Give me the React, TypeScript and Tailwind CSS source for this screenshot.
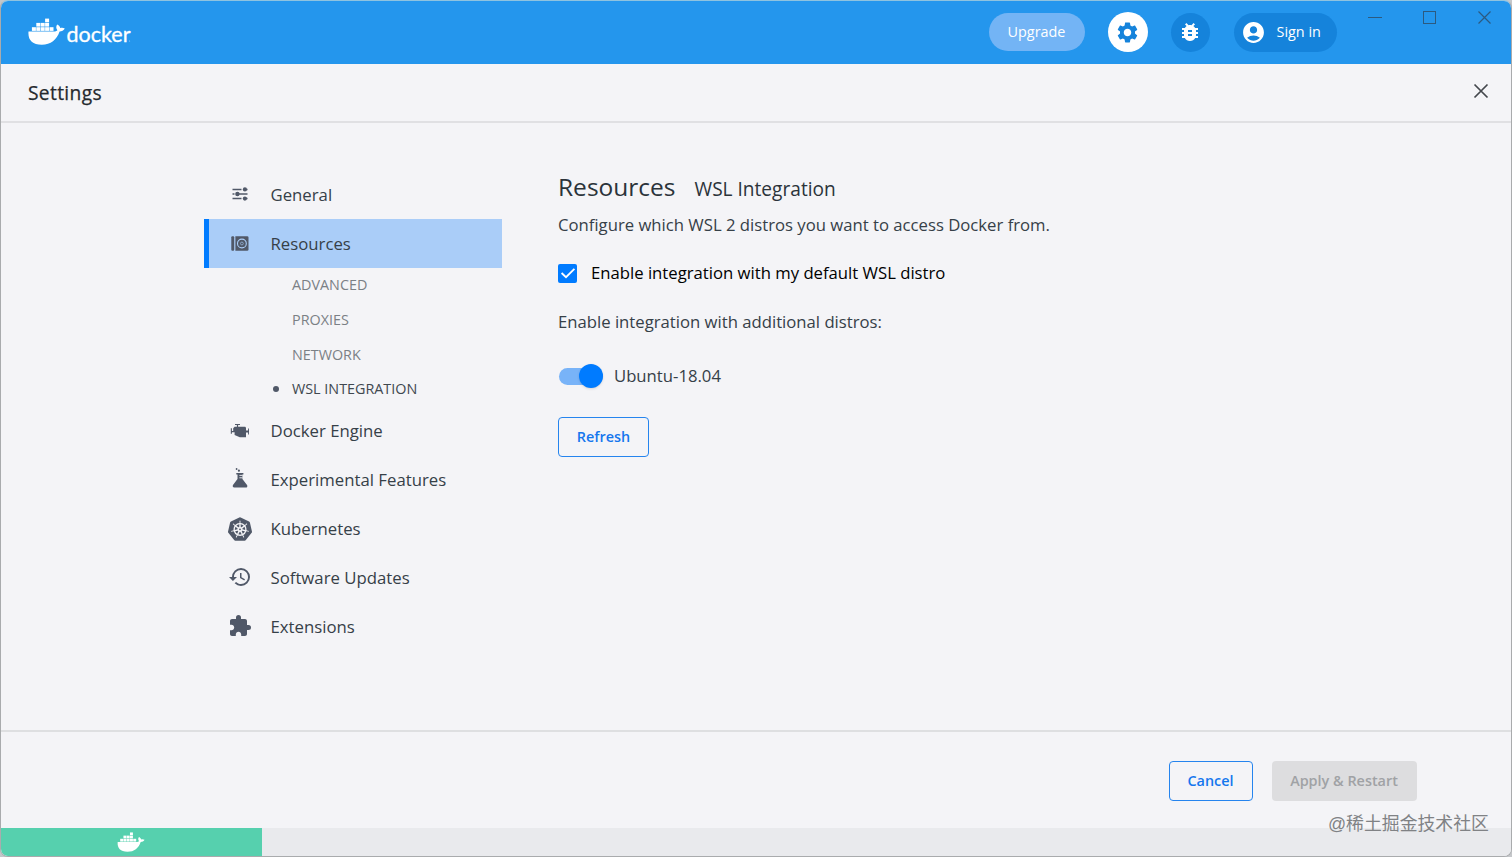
import type { ReactNode } from "react";
import { MdAccountCircle, MdBugReport, MdExtension, MdHistory, MdSettings } from "react-icons/md";
import { SiKubernetes } from "react-icons/si";

type NavItem = {
  label: string;
  icon: ReactNode;
  active?: boolean;
  children?: string[];
};

function Whale({ className }: { className?: string }) {
  return (
    <svg viewBox="0 0 37 27" className={className} fill="currentColor">
      <rect x="17.1" y="0.6" width="4" height="3.7" />
      {[8.3, 12.7, 17.1].map((x) => (
        <rect key={x} x={x} y="4.9" width="4" height="3.7" />
      ))}
      {[3.9, 8.3, 12.7, 17.1, 21.5].map((x) => (
        <rect key={x} x={x} y="9.2" width="4" height="3.7" />
      ))}
      <path d="M0.5 13.6H25.5C27.4 13.6 28.8 13 29.4 12.2C28 10.4 27.8 8.4 29.3 6.6C31 7.4 32 8.8 32.2 10.1C33.8 9.7 35.5 9.8 36.8 10.6C35.8 12.7 33.7 13.6 31.6 13.6C28.7 22 22.9 26.8 13.8 26.8C4.2 26.8-.2 21.9.5 13.6Z" />
    </svg>
  );
}

function SlidersIcon() {
  return (
    <svg viewBox="0 0 16 14" className="h-[14px] w-4" fill="currentColor" stroke="currentColor" strokeWidth="1.5">
      <path d="M.5 2.5H9.5M12 2.5H15.5M.5 7H2.5M5.5 7H15.5M.5 11.5H9.5M12 11.5H15.5" fill="none" />
      <g stroke="none">
        <circle cx="12.9" cy="2.4" r="2.1" />
        <circle cx="5.4" cy="7" r="2.2" />
        <circle cx="12.9" cy="11.6" r="2.1" />
      </g>
    </svg>
  );
}

function DiskIcon() {
  return (
    <svg viewBox="0 0 18 15" className="h-[15px] w-[18px]" fill="currentColor">
      <rect x="0.3" y="0.3" width="2.9" height="14.4" rx="1" />
      <path d="M4.4.3H16.2Q17.5.3 17.5 1.5V13.5Q17.5 14.7 16.2 14.7H4.4Z" />
      <circle cx="10.9" cy="7.5" r="4.4" fill="none" stroke="#aacdf8" strokeWidth="1.1" />
      <circle cx="10.9" cy="7.5" r="1.4" fill="none" stroke="#aacdf8" strokeWidth="0.6" />
    </svg>
  );
}

function EngineIcon() {
  return (
    <svg viewBox="0 0 20 16" className="h-4 w-5" fill="currentColor">
      <path d="M5 1H10V2H8.1V3.8H15.2L16 4.8V14.3H9.8L4.6 11.9V9.2H1.9V10.8H.8V5.2H1.9V7.9H3.2V5.2L4.6 3.8H6.9V2H5ZM16 7.6H18.1V5.6H19V11.6H18.1V9.4H16Z" />
    </svg>
  );
}

function FlaskIcon() {
  return (
    <svg viewBox="0 0 16 20" className="mb-[3px] h-5 w-4" fill="currentColor">
      <circle cx="4.6" cy="1" r=".9" />
      <circle cx="6.9" cy="2.7" r="1.1" />
      <path d="M4.3 5H11.4V6.5H10.4V11L15.2 17.2Q15.8 19.5 13.7 19.6H2.2Q.2 19.5.8 17.2L5.5 11V6.5H4.3Z" />
      <path d="M7.4 7.4H10.6M7.4 9.8H10.6" stroke="#f4f4f7" strokeWidth="0.9" />
    </svg>
  );
}

const navItems: NavItem[] = [
  { label: "General", icon: <SlidersIcon /> },
  {
    label: "Resources",
    icon: <DiskIcon />,
    active: true,
    children: ["ADVANCED", "PROXIES", "NETWORK", "WSL INTEGRATION"],
  },
  { label: "Docker Engine", icon: <EngineIcon /> },
  { label: "Experimental Features", icon: <FlaskIcon /> },
  { label: "Kubernetes", icon: <SiKubernetes size={24} /> },
  { label: "Software Updates", icon: <MdHistory size={24} /> },
  { label: "Extensions", icon: <MdExtension size={24} /> },
];

function TitleBar() {
  return (
    <header className="flex h-[63px] shrink-0 items-start bg-[#2496ed] pl-[27px] text-white">
      <div className="flex items-start pt-[17px]">
        <Whale className="h-[27px] w-[37px]" />
        <svg viewBox="0 0 68 27" className="h-[27px] w-[68px]">
          <text
            x="1.5"
            y="23.5"
            textLength="64"
            lengthAdjust="spacingAndGlyphs"
            className="fill-white stroke-white stroke-[0.3px] font-['Lato',sans-serif] text-[20.5px]"
          >
            docker
          </text>
          <circle cx="64.6" cy="23" r="0.5" fill="white" opacity="0.6" />
        </svg>
      </div>
      <div className="ml-auto flex items-center pt-[11px] text-[14.4px]">
        <button className="h-[38px] w-[96px] rounded-full bg-[#73b4f5]">Upgrade</button>
        <button className="ml-[23px] flex size-10 items-center justify-center rounded-full bg-white text-[#1583db]">
          <MdSettings size={25} />
        </button>
        <button className="ml-[23px] flex size-[39px] items-center justify-center rounded-full bg-[#1583db]">
          <MdBugReport size={24} />
        </button>
        <button className="ml-6 flex h-[39px] w-[103px] items-center rounded-full bg-[#1583db] pl-[7px]">
          <MdAccountCircle size={25} />
          <span className="ml-[11px]">Sign in</span>
        </button>
      </div>
      <div className="ml-[30.5px] flex gap-[40px] pt-[8px] pr-[19px] text-[#2c5a80]">
        <svg className="size-[15px]" viewBox="0 0 15 15" fill="none" stroke="currentColor">
          <path d="M1 8.5H15" />
        </svg>
        <svg className="size-[15px]" viewBox="0 0 15 15" fill="none" stroke="currentColor">
          <rect x="1.5" y="2.5" width="12" height="12" />
        </svg>
        <svg className="size-[15px]" viewBox="0 0 15 15" fill="none" stroke="currentColor" strokeWidth="1.2">
          <path d="M1.5 2.5L13.5 14.5M13.5 2.5L1.5 14.5" />
        </svg>
      </div>
    </header>
  );
}

function Sidebar() {
  return (
    <nav className="ml-[202.5px] w-[298px] shrink-0 pt-[47px] text-[16.75px] text-[#364048]">
      {navItems.map((item) => (
        <div key={item.label}>
          <div
            className={
              item.active
                ? "flex h-[49px] items-center border-l-[5px] border-[#007bff] bg-[#aacdf8]"
                : "flex h-[48.8px] items-center border-l-[5px] border-transparent"
            }
          >
            <span className="ml-[17px] flex w-[28px] justify-center text-[#505868]">{item.icon}</span>
            <span className="ml-[17px]">{item.label}</span>
          </div>
          {item.children ? (
            <ul className="text-[14.35px] text-[#7b8085]">
              {item.children.map((child) => (
                <li
                  key={child}
                  className={
                    child === "WSL INTEGRATION"
                      ? "flex h-[34.7px] items-center pl-[69px] text-[#40484f]"
                      : "flex h-[34.7px] items-center pl-[88.5px]"
                  }
                >
                  {child === "WSL INTEGRATION" ? (
                    <span className="mr-[13.5px] size-[6px] rounded-full bg-[#505868]" />
                  ) : null}
                  {child}
                </li>
              ))}
            </ul>
          ) : null}
        </div>
      ))}
    </nav>
  );
}

function WslSettings() {
  return (
    <main className="ml-[56.5px] flex flex-col items-start pt-[46px] text-[16.7px] text-[#364048]">
      <h1 className="flex h-[36px] items-baseline text-[24.5px] leading-[36px] text-[#2b333a]">
        <span>Resources</span>
        <span className="ml-[19px] text-[19.1px]">WSL Integration</span>
      </h1>
      <p className="mt-[8px] leading-6">Configure which WSL 2 distros you want to access Docker from.</p>
      <label className="mt-6 flex h-6 items-center text-black">
        <span className="flex size-[19px] items-center justify-center rounded-[2px] bg-[#007bff]">
          <svg viewBox="0 0 16 14" className="h-[14px] w-4" fill="none" stroke="white" strokeWidth="1.8">
            <path d="M1.6 7L6 11.2L14.4 2.8" />
          </svg>
        </span>
        <span className="ml-[14px]">Enable integration with my default WSL distro</span>
      </label>
      <p className="mt-[25px] leading-6">Enable integration with additional distros:</p>
      <div className="mt-[30px] flex h-6 items-center">
        <span className="ml-px flex h-[17px] w-[44px] items-center justify-end rounded-full bg-[#78b3f8]">
          <span className="size-6 shrink-0 rounded-full bg-[#007bff] shadow-sm" />
        </span>
        <span className="ml-[11px]">Ubuntu-18.04</span>
      </div>
      <button className="mt-[29px] h-10 w-[91px] rounded-[4px] border-[1.5px] border-[#2584ee] text-[14.4px] font-semibold text-[#1577ee]">
        Refresh
      </button>
    </main>
  );
}

export default function App() {
  return (
    <div className="h-[857px] w-[1512px] overflow-hidden bg-[#c5c7ca] font-['Open_Sans',sans-serif]">
      <div className="flex h-[857px] flex-col overflow-hidden rounded-lg border border-[#a9abad] border-t-[#8fc3df] bg-[#f4f4f7]">
        <TitleBar />
        <div className="flex h-[59px] shrink-0 items-center justify-between border-b-2 border-[#e0e0e3] pr-[22px] pl-[27px]">
          <h2 className="pt-[2px] text-[19.2px] font-medium tracking-[0.35px] text-[#24292e] [-webkit-text-stroke:0.25px_#24292e]">
            Settings
          </h2>
          <svg viewBox="0 0 16 16" className="mb-[3px] size-4" fill="none" stroke="#43474c" strokeWidth="1.7">
            <path d="M1.5 1.5L14.5 14.5M14.5 1.5L1.5 14.5" />
          </svg>
        </div>
        <div className="flex min-h-0 grow">
          <Sidebar />
          <WslSettings />
        </div>
        <footer className="flex h-[98px] shrink-0 items-center justify-end gap-[19px] border-t-2 border-[#dedfe1] pt-px pr-[94.5px] text-[14.4px] font-semibold">
          <button className="h-10 w-[84px] rounded-[4px] border-[1.5px] border-[#2584ee] text-[#1577ee]">Cancel</button>
          <button className="h-10 w-[145px] rounded-[4px] bg-[#dddddf] text-[#a0a2a5]">Apply &amp; Restart</button>
        </footer>
        <div className="flex h-7 shrink-0 bg-[#e9eaed]">
          <div className="flex w-[261px] justify-center bg-[#56d0ae] pt-[4px] pr-[2px] text-white">
            <Whale className="h-5 w-[28px]" />
          </div>
        </div>
      </div>
      <span className="absolute top-[812px] left-[1328px] font-['Liberation_Sans','Noto_Sans_CJK_SC',sans-serif] text-[17.85px] leading-6 whitespace-nowrap text-[#808285]">
        @稀土掘金技术社区
      </span>
    </div>
  );
}
